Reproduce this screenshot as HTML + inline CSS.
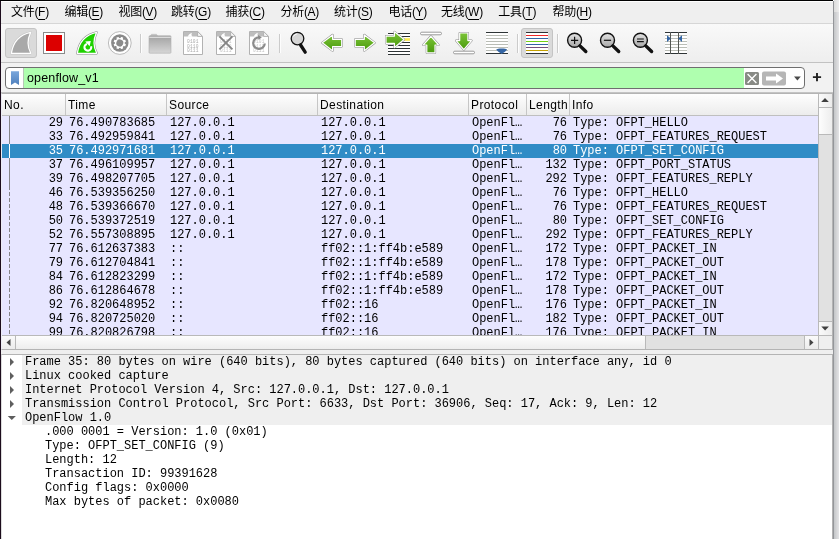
<!DOCTYPE html><html lang="zh-CN"><head><meta charset="utf-8"><title>Wireshark</title><style>html,body{margin:0;padding:0;}
body{width:839px;height:539px;overflow:hidden;background:#fff;position:relative;font-family:"Liberation Sans","Noto Sans CJK SC",sans-serif;font-size:12px;color:#000;}
#win{position:absolute;left:0;top:0;width:833px;height:539px;background:#efefef;overflow:hidden;}
#lb{position:absolute;left:0;top:0;width:1px;height:539px;background:#1c0c1c;}
#tb{position:absolute;left:0;top:0;width:833px;height:1px;background:#000;}
#rb1{position:absolute;left:833px;top:1px;width:1px;height:538px;background:#94969a;}
#rb2{position:absolute;left:834px;top:0;width:5px;height:539px;background:linear-gradient(90deg,#c4c6c8,#e4e4e6);}#rb3{position:absolute;left:834px;top:0;width:5px;height:12px;background:linear-gradient(90deg,#dcdcdc,#ececec);}
#menubar{position:absolute;left:1px;top:1px;width:832px;height:23px;background:#efefef;border-top:1px solid #fff;box-sizing:border-box;border-bottom:1px solid #d6d6d6;}
.mi{position:absolute;top:2px;line-height:16px;font-size:12px;white-space:nowrap;letter-spacing:-0.3px;}
.mi u{text-decoration:underline;text-underline-offset:2.5px;text-decoration-thickness:1px;}
#toolbar{position:absolute;left:1px;top:24px;width:832px;height:39px;background:linear-gradient(#f9f9f9,#eeeeee);border-bottom:1px solid #c2c2c2;box-sizing:border-box;}
#toolbar svg{position:absolute;}
.tbtn{position:absolute;top:4px;height:30px;box-sizing:border-box;border:1px solid #c4c4c4;border-radius:3px;background:#dadada;}
.tsep{position:absolute;top:10px;width:1px;height:19px;background:#cbcbcb;border-right:1px solid #fdfdfd;}
#filterbar{position:absolute;left:1px;top:63px;width:832px;height:30px;background:#f2f2f2;border-bottom:1px solid #c4c4c4;box-sizing:border-box;}
#fentry{position:absolute;left:4px;top:4px;width:800px;height:22px;box-sizing:border-box;border:1px solid #6f6f6f;border-radius:4px;background:#fff;overflow:hidden;}
#fgreen{position:absolute;left:18px;top:0;width:720px;height:20px;background:#afffaf;}
#ftext{position:absolute;left:21px;top:1px;line-height:18px;font-size:12.5px;letter-spacing:0.15px;}
#plist{position:absolute;left:1px;top:93px;width:832px;height:257px;background:#fff;border:1px solid #b4b4b4;border-left-color:#ececf4;box-sizing:border-box;}
#phead{position:absolute;left:0;top:0;width:816px;height:22px;background:linear-gradient(#fefefe,#ececec);border-bottom:1px solid #bfbfbf;box-sizing:border-box;}
.hc{position:absolute;top:0;height:21px;box-sizing:border-box;border-right:1px solid #c6c6c6;}
.hc span{position:absolute;left:2px;top:3px;line-height:16px;font-size:12px;letter-spacing:0.4px;}
#prows{position:absolute;left:0;top:22px;width:816px;height:219px;background:#e7e6ff;overflow:hidden;font-family:"Liberation Mono",monospace;font-size:12px;letter-spacing:-0.017px;}
.pr{position:absolute;left:0;width:816px;height:14px;line-height:15px;white-space:pre;}
.pr.sel{background:#308cc6;color:#fff;}
.c{position:absolute;top:0;}
.no{left:0;width:61px;text-align:right;}
.tm{left:67px;}
.src{left:168px;}
.dst{left:319px;}
.pro{left:470px;}
.len{left:525px;width:40px;text-align:right;}
.inf{left:571px;}
#rel1{position:absolute;left:7px;top:0;width:1px;height:70px;background:#858588;}
#rel2{position:absolute;left:7px;top:70px;width:1px;height:160px;background:repeating-linear-gradient(180deg,#858588 0,#858588 4px,transparent 4px,transparent 6px);}
#relsel{position:absolute;left:7px;top:28px;width:1px;height:14px;background:#fff;}
#details{position:absolute;left:1px;top:354px;width:832px;height:185px;background:#fff;border-top:1px solid #b4b4b4;border-left:1px solid #dcdcdc;border-right:1px solid #b2b2b2;box-sizing:border-box;font-family:"Liberation Mono",monospace;font-size:12px;letter-spacing:-0.017px;}
.dr{position:absolute;left:20px;width:810px;height:14px;line-height:15px;white-space:pre;background:#efefef;}
.dr span{position:absolute;left:3px;top:0;}
.dc{position:absolute;left:43px;height:14px;line-height:15px;white-space:pre;}
.tri{position:absolute;width:0;height:0;}
#win{will-change:transform;}
</style></head><body>
<div id="win">
<div id="menubar">
<span class="mi" style="left:10px">文件(<u>F</u>)</span>
<span class="mi" style="left:63.5px">编辑(<u>E</u>)</span>
<span class="mi" style="left:117.5px">视图(<u>V</u>)</span>
<span class="mi" style="left:170px">跳转(<u>G</u>)</span>
<span class="mi" style="left:224.5px">捕获(<u>C</u>)</span>
<span class="mi" style="left:279.5px">分析(<u>A</u>)</span>
<span class="mi" style="left:333px">统计(<u>S</u>)</span>
<span class="mi" style="left:387.5px">电话(<u>Y</u>)</span>
<span class="mi" style="left:440px">无线(<u>W</u>)</span>
<span class="mi" style="left:497.3px">工具(<u>T</u>)</span>
<span class="mi" style="left:551.5px">帮助(<u>H</u>)</span>
</div>
<div id="toolbar"><div class="tbtn" style="left:4px;width:32px"></div>
<div class="tbtn" style="left:520px;width:32px"></div>
<div class="tsep" style="left:139px"></div><div class="tsep" style="left:278px"></div><div class="tsep" style="left:516px"></div><div class="tsep" style="left:556px"></div>
<svg style="left:0;top:0" width="832" height="38" viewBox="1 24 832 38">
<defs>
<linearGradient id="gg" x1="0" y1="0" x2="0" y2="1"><stop offset="0" stop-color="#7cc438"/><stop offset="1" stop-color="#4a9a0c"/></linearGradient>
<linearGradient id="fg" x1="0" y1="0" x2="0" y2="1"><stop offset="0" stop-color="#9c9c9c"/><stop offset="0.12" stop-color="#a8a8a8"/><stop offset="1" stop-color="#d6d6d6"/></linearGradient>
<linearGradient id="lg" x1="0" y1="0" x2="0" y2="1"><stop offset="0" stop-color="#e2e2e2"/><stop offset="1" stop-color="#a8a8a8"/></linearGradient>
<g id="fin"><path d="M31.4 31.6 C20 34 12.5 42 10.6 53.9 H31.6 C27.6 47 27.8 39 31.4 31.6 Z"/></g>
<g id="doc"><path d="M0.5 0.5 H14.6 L19.5 5.4 V23.5 H0.5 Z" fill="#fff" stroke="#b2b2b2"/><path d="M1 1 H14.4 L16 2.6 V5.6 H1 Z" fill="#bdbdbd"/><path d="M4.6 5.7 C5.4 3.7 6.9 2.4 8.9 1.7 C8.2 3.3 8.4 4.5 9.5 5.7 Z" fill="#fff"/><path d="M14.6 0.5 V5.4 H19.5 Z" fill="#f6f6f6" stroke="#b2b2b2" stroke-linejoin="round"/></g>
<g id="bits" font-family="Liberation Mono, monospace" font-size="4.6" fill="#aaaaaa"><text x="3.9" y="11.8" textLength="11.7">0101</text><text x="3.9" y="16.5" textLength="11.7">0110</text><text x="3.9" y="21.2" textLength="11.7">0111</text></g>
<g id="lens"><circle cx="0" cy="0" r="7" fill="url(#lg)" stroke="#111" stroke-width="1.4"/><path d="M5.4 5.6 L11.2 11.2" stroke="#111" stroke-width="3.4" stroke-linecap="round"/></g>
</defs>
<!-- fin start (disabled/pressed) -->
<g transform="translate(21.1 42.85) scale(0.93 0.94) translate(-21.1 -42.75)"><use href="#fin" fill="#a9a9a9" stroke="#c4c4c4" stroke-width="2.4" stroke-linejoin="round"/><use href="#fin" fill="#a9a9a9" stroke="#fff" stroke-width="1.3" stroke-linejoin="round"/></g>
<!-- stop -->
<rect x="43.5" y="32.5" width="21" height="21" fill="#fff" stroke="#8a8a8a"/><rect x="46" y="35" width="16" height="16" fill="#dc0000"/>
<!-- restart fin -->
<g transform="translate(87.05 42.85) scale(0.93 0.94) translate(-21.1 -42.75)"><use href="#fin" fill="#1fd000" stroke="#8a8a8a" stroke-width="2.4" stroke-linejoin="round"/><use href="#fin" fill="#1fd000" stroke="#fff" stroke-width="1.3" stroke-linejoin="round"/></g>
<path d="M91.1 46.3 A3.4 3.4 0 1 1 87 43.95" fill="none" stroke="#fff" stroke-width="2.1"/><path d="M85.2 41.6 L90.8 41 L89.6 46.2 Z" fill="#fff"/>
<!-- gear -->
<circle cx="119.8" cy="43" r="11.4" fill="#fff" stroke="#aaa" stroke-width="0.8"/><circle cx="119.8" cy="43" r="8.7" fill="#8a8a8a"/>
<g transform="translate(119.8 43) rotate(22.5)" fill="#fff"><circle r="4.9"/><rect x="-1.25" y="-6.2" width="2.5" height="12.4" rx="0.4"/><rect x="-1.25" y="-6.2" width="2.5" height="12.4" rx="0.4" transform="rotate(45)"/><rect x="-1.25" y="-6.2" width="2.5" height="12.4" rx="0.4" transform="rotate(90)"/><rect x="-1.25" y="-6.2" width="2.5" height="12.4" rx="0.4" transform="rotate(135)"/><circle r="3.5" fill="#8a8a8a"/></g>
<!-- folder -->
<path d="M150.5 36 L151.5 34.3 H156.5 L157.5 36 Z" fill="#c4c4c4" stroke="#bcbcbc" stroke-width="0.6"/>
<rect x="149" y="35.8" width="22" height="17.4" rx="0.8" fill="url(#fg)" stroke="#b0b0b0" stroke-width="0.6"/><rect x="149.3" y="36.8" width="21.4" height="0.9" fill="#f2f2f2"/>
<!-- files -->
<g transform="translate(183 31)"><use href="#doc"/><use href="#bits"/></g>
<g transform="translate(216 31)"><use href="#doc"/><use href="#bits" opacity="0.7"/><path d="M3.4 5.4 L16.4 18.4 M16.4 5.4 L3.4 18.4" stroke="#858585" stroke-width="1.9"/></g>
<g transform="translate(249 31)"><use href="#doc"/><use href="#bits" opacity="0.7"/><path d="M10.2 6.3 A5.8 5.8 0 1 0 15.8 12.5" fill="none" stroke="#8b8b8b" stroke-width="2.2"/><path d="M9.2 3.8 L12.8 6.6 L9.2 8.9 Z" fill="#8b8b8b" transform="rotate(-8 10.2 6.3)"/></g>
<!-- find -->
<circle cx="297.5" cy="38.6" r="6.3" fill="#d6d6d6" stroke="#111" stroke-width="1.3"/><path d="M293.5 36.5 A4.5 4.5 0 0 1 297 33.8" fill="none" stroke="#fff" stroke-width="0.9"/><path d="M300.6 45 L305.2 52.2" stroke="#111" stroke-width="3.3" stroke-linecap="round"/>
<!-- back / forward -->
<g id="larr"><path d="M322.3 42.8 L332.6 35 V39.3 H341.7 V46.5 H332.6 V50.7 Z" fill="url(#gg)" stroke="#8c8c8c" stroke-width="2.2" stroke-linejoin="round"/><path d="M322.3 42.8 L332.6 35 V39.3 H341.7 V46.5 H332.6 V50.7 Z" fill="url(#gg)" stroke="#fff" stroke-width="1.2" stroke-linejoin="round"/></g>
<g transform="translate(696.9 0) scale(-1 1)"><use href="#larr"/></g>
<!-- goto -->
<rect x="388" y="33" width="22" height="22" fill="#fff"/>
<path d="M388 33.5 H410 M388 36.5 H410 M388 42.5 H410 M388 45.5 H410 M388 48.5 H410 M388 51.5 H410 M388 54.5 H410" stroke="#2e3436" stroke-width="1"/><rect x="400" y="38.2" width="10" height="2.6" fill="#fce94f"/>
<g transform="translate(703.8 -3.2) scale(-0.93 1)"><use href="#larr"/></g>
<!-- first -->
<rect x="420.5" y="32.2" width="21" height="2.6" rx="1.3" fill="#fff" stroke="#909090" stroke-width="0.9"/>
<path d="M430.9 36.3 L438.6 45 H435 V52.8 H426.8 V45 H423.2 Z" fill="url(#gg)" stroke="#8c8c8c" stroke-width="2.2" stroke-linejoin="round"/><path d="M430.9 36.3 L438.6 45 H435 V52.8 H426.8 V45 H423.2 Z" fill="url(#gg)" stroke="#fff" stroke-width="1.2" stroke-linejoin="round"/>
<!-- last -->
<path d="M463.8 49.6 L471.5 40.6 H467.9 V33 H459.7 V40.6 H456.1 Z" fill="url(#gg)" stroke="#8c8c8c" stroke-width="2.2" stroke-linejoin="round"/><path d="M463.8 49.6 L471.5 40.6 H467.9 V33 H459.7 V40.6 H456.1 Z" fill="url(#gg)" stroke="#fff" stroke-width="1.2" stroke-linejoin="round"/>
<rect x="453.5" y="51.2" width="21" height="2.6" rx="1.3" fill="#fff" stroke="#909090" stroke-width="0.9"/>
<!-- autoscroll -->
<rect x="486" y="32" width="22" height="22" fill="#fff"/>
<path d="M486 35.5 H508 M486 38.5 H508 M486 41.5 H508 M486 44.5 H508 M486 47.5 H508 M486 50.5 H508" stroke="#babdb6" stroke-width="1"/><path d="M486 32.5 H508 M486 53.5 H508" stroke="#2e3436" stroke-width="1"/>
<path d="M496.2 49.6 C497 48 506.4 48 507.2 49.6 C506 51.5 503.5 53 501.7 54 C499.9 53 497.4 51.5 496.2 49.6 Z" fill="#3465a4"/>
<!-- colorize -->
<rect x="526" y="32" width="22" height="22" fill="#fff"/>
<path d="M526 32.5 H548 M526 53.5 H548" stroke="#2e3436"/><path d="M526 35.5 H548" stroke="#ef2929"/><path d="M526 38.5 H548 M526 44.5 H548" stroke="#3465a4"/><path d="M526 41.5 H548" stroke="#73d216"/><path d="M526 47.5 H548" stroke="#75507b"/><path d="M526 50.5 H548" stroke="#c4a000"/>
<!-- zoom -->
<g transform="translate(574.6 40.3)"><use href="#lens"/><path d="M-3.6 0 H3.6 M0 -3.6 V3.6" stroke="#111" stroke-width="1.2"/></g>
<g transform="translate(607.5 40.3)"><use href="#lens"/><path d="M-3.6 0 H3.6" stroke="#111" stroke-width="1.2"/></g>
<g transform="translate(640.4 40.3)"><use href="#lens"/><path d="M-3.4 -1.3 H3.4 M-3.4 1.3 H3.4" stroke="#111" stroke-width="1.1"/></g>
<!-- resize columns -->
<rect x="665" y="32" width="22" height="22" fill="#fff"/>
<path d="M665 35.5 H687 M665 38.5 H687 M665 41.5 H687 M665 44.5 H687 M665 47.5 H687 M665 50.5 H687" stroke="#babdb6"/><path d="M665 32.5 H687 M665 53.5 H687" stroke="#2e3436"/><path d="M670.5 32 V54 M678.5 32 V54" stroke="#555753"/>
<path d="M667 35.3 L670.8 38.6 L667 42 Z M682 35.3 L678.2 38.6 L682 42 Z" fill="#3465a4"/>
</svg>
</div>
<div id="filterbar">
<div id="fentry"><div id="fgreen"></div><div style="position:absolute;left:17px;top:0;width:1px;height:20px;background:#b8c8b8"></div>
<svg style="position:absolute;left:3px;top:2px" width="12" height="16" viewBox="0 0 12 16"><defs><linearGradient id="bk" x1="0" y1="0" x2="0" y2="1"><stop offset="0" stop-color="#7aa7dc"/><stop offset="1" stop-color="#4f80bd"/></linearGradient></defs><path d="M2 1.2 H10 V15 L6 12.4 L2 15 Z" fill="url(#bk)"/></svg>
<span id="ftext">openflow_v1</span>
<svg style="position:absolute;left:738px;top:3px" width="60" height="16" viewBox="0 0 60 16">
<rect x="1" y="1" width="14" height="13" rx="1.5" fill="#888a85"/><path d="M3.6 3.1 L12.4 11.9 M12.4 3.1 L3.6 11.9" stroke="#fff" stroke-width="1.4"/>
<rect x="18" y="0.5" width="24" height="14" rx="2" fill="#b6b6b6"/><path d="M22 5.5 H32 V2.5 L39 7.5 L32 12.5 V9.5 H22 Z" fill="#fff"/>
<path d="M50 5.6 H56.8 L53.4 9.4 Z" fill="#4a4a4a"/>
</svg>
</div>
<svg style="position:absolute;left:810px;top:8px" width="12" height="12" viewBox="0 0 12 12"><path d="M6 2 V10.2 M1.9 6.1 H10.1" stroke="#222" stroke-width="1.9"/></svg>
</div>

<div id="plist">
<div id="phead">
<div class="hc" style="left:0px;width:64px"><span>No.</span></div>
<div class="hc" style="left:64px;width:101px"><span>Time</span></div>
<div class="hc" style="left:165px;width:151px"><span>Source</span></div>
<div class="hc" style="left:316px;width:151px"><span>Destination</span></div>
<div class="hc" style="left:467px;width:58px"><span>Protocol</span></div>
<div class="hc" style="left:525px;width:43px"><span>Length</span></div>
<div class="hc" style="left:568px;width:248px;border-right:0"><span>Info</span></div>
</div>
<div id="prows">
<div class="pr" style="top:0px"><span class="c no">29</span><span class="c tm">76.490783685</span><span class="c src">127.0.0.1</span><span class="c dst">127.0.0.1</span><span class="c pro">OpenFl…</span><span class="c len">76</span><span class="c inf">Type: OFPT_HELLO</span></div>
<div class="pr" style="top:14px"><span class="c no">33</span><span class="c tm">76.492959841</span><span class="c src">127.0.0.1</span><span class="c dst">127.0.0.1</span><span class="c pro">OpenFl…</span><span class="c len">76</span><span class="c inf">Type: OFPT_FEATURES_REQUEST</span></div>
<div class="pr sel" style="top:28px"><span class="c no">35</span><span class="c tm">76.492971681</span><span class="c src">127.0.0.1</span><span class="c dst">127.0.0.1</span><span class="c pro">OpenFl…</span><span class="c len">80</span><span class="c inf">Type: OFPT_SET_CONFIG</span></div>
<div class="pr" style="top:42px"><span class="c no">37</span><span class="c tm">76.496109957</span><span class="c src">127.0.0.1</span><span class="c dst">127.0.0.1</span><span class="c pro">OpenFl…</span><span class="c len">132</span><span class="c inf">Type: OFPT_PORT_STATUS</span></div>
<div class="pr" style="top:56px"><span class="c no">39</span><span class="c tm">76.498207705</span><span class="c src">127.0.0.1</span><span class="c dst">127.0.0.1</span><span class="c pro">OpenFl…</span><span class="c len">292</span><span class="c inf">Type: OFPT_FEATURES_REPLY</span></div>
<div class="pr" style="top:70px"><span class="c no">46</span><span class="c tm">76.539356250</span><span class="c src">127.0.0.1</span><span class="c dst">127.0.0.1</span><span class="c pro">OpenFl…</span><span class="c len">76</span><span class="c inf">Type: OFPT_HELLO</span></div>
<div class="pr" style="top:84px"><span class="c no">48</span><span class="c tm">76.539366670</span><span class="c src">127.0.0.1</span><span class="c dst">127.0.0.1</span><span class="c pro">OpenFl…</span><span class="c len">76</span><span class="c inf">Type: OFPT_FEATURES_REQUEST</span></div>
<div class="pr" style="top:98px"><span class="c no">50</span><span class="c tm">76.539372519</span><span class="c src">127.0.0.1</span><span class="c dst">127.0.0.1</span><span class="c pro">OpenFl…</span><span class="c len">80</span><span class="c inf">Type: OFPT_SET_CONFIG</span></div>
<div class="pr" style="top:112px"><span class="c no">52</span><span class="c tm">76.557308895</span><span class="c src">127.0.0.1</span><span class="c dst">127.0.0.1</span><span class="c pro">OpenFl…</span><span class="c len">292</span><span class="c inf">Type: OFPT_FEATURES_REPLY</span></div>
<div class="pr" style="top:126px"><span class="c no">77</span><span class="c tm">76.612637383</span><span class="c src">::</span><span class="c dst">ff02::1:ff4b:e589</span><span class="c pro">OpenFl…</span><span class="c len">172</span><span class="c inf">Type: OFPT_PACKET_IN</span></div>
<div class="pr" style="top:140px"><span class="c no">79</span><span class="c tm">76.612704841</span><span class="c src">::</span><span class="c dst">ff02::1:ff4b:e589</span><span class="c pro">OpenFl…</span><span class="c len">178</span><span class="c inf">Type: OFPT_PACKET_OUT</span></div>
<div class="pr" style="top:154px"><span class="c no">84</span><span class="c tm">76.612823299</span><span class="c src">::</span><span class="c dst">ff02::1:ff4b:e589</span><span class="c pro">OpenFl…</span><span class="c len">172</span><span class="c inf">Type: OFPT_PACKET_IN</span></div>
<div class="pr" style="top:168px"><span class="c no">86</span><span class="c tm">76.612864678</span><span class="c src">::</span><span class="c dst">ff02::1:ff4b:e589</span><span class="c pro">OpenFl…</span><span class="c len">178</span><span class="c inf">Type: OFPT_PACKET_OUT</span></div>
<div class="pr" style="top:182px"><span class="c no">92</span><span class="c tm">76.820648952</span><span class="c src">::</span><span class="c dst">ff02::16</span><span class="c pro">OpenFl…</span><span class="c len">176</span><span class="c inf">Type: OFPT_PACKET_IN</span></div>
<div class="pr" style="top:196px"><span class="c no">94</span><span class="c tm">76.820725020</span><span class="c src">::</span><span class="c dst">ff02::16</span><span class="c pro">OpenFl…</span><span class="c len">182</span><span class="c inf">Type: OFPT_PACKET_OUT</span></div>
<div class="pr" style="top:210px"><span class="c no">99</span><span class="c tm">76.820826798</span><span class="c src">::</span><span class="c dst">ff02::16</span><span class="c pro">OpenFl…</span><span class="c len">176</span><span class="c inf">Type: OFPT_PACKET_IN</span></div>
<div id="rel1"></div><div id="rel2"></div><div id="relsel"></div>
</div>
<div id="vs" style="position:absolute;left:816px;top:0;width:13px;height:241px;background:#e1e1e1;border-left:1px solid #b9b9b9;">
<div style="position:absolute;left:0;top:0;width:13px;height:13px;background:linear-gradient(90deg,#fafafa,#ececec);border-bottom:1px solid #b9b9b9;"><svg width="13" height="13" style="position:absolute;left:0;top:0"><path d="M2.2 8.1 L6 4 L9.8 8.1 Z" fill="#3e3e3e"/></svg></div>
<div style="position:absolute;left:0;top:14px;width:13px;height:26px;background:linear-gradient(90deg,#fdfdfd,#ededed);border-bottom:1px solid #b9b9b9;"></div>
<div style="position:absolute;left:0;top:227px;width:13px;height:14px;background:linear-gradient(90deg,#fafafa,#ececec);border-top:1px solid #b9b9b9;box-sizing:border-box"><svg width="13" height="13" style="position:absolute;left:0;top:0"><path d="M2.3 4.4 L6.1 8.4 L9.9 4.4 Z" fill="#3e3e3e"/></svg></div>
</div>
<div id="hs" style="position:absolute;left:0;top:241px;width:830px;height:14px;background:#e1e1e1;border-top:1px solid #b9b9b9;box-sizing:border-box;">
<div style="position:absolute;left:0;top:0;width:13px;height:13px;background:linear-gradient(#fafafa,#ececec);border-right:1px solid #b9b9b9;"><svg width="13" height="13" style="position:absolute;left:0;top:0"><path d="M8.5 3 L4.5 6.5 L8.5 10 Z" fill="#444"/></svg></div>
<div style="position:absolute;left:14px;top:0;width:629px;height:13px;background:linear-gradient(#fdfdfd,#ededed);border-right:1px solid #b9b9b9;"></div>
<div style="position:absolute;left:802px;top:0;width:13px;height:13px;background:linear-gradient(#fafafa,#ececec);border-left:1px solid #b9b9b9;border-right:1px solid #b9b9b9;"><svg width="13" height="13" style="position:absolute;left:0;top:0"><path d="M4.5 3 L8.5 6.5 L4.5 10 Z" fill="#444"/></svg></div>
<div style="position:absolute;left:817px;top:0;width:13px;height:13px;background:#efefef;"></div>
</div>

</div>
<div id="details">
<div class="dr" style="top:0"><span>Frame 35: 80 bytes on wire (640 bits), 80 bytes captured (640 bits) on interface any, id 0</span></div>
<div class="dr" style="top:14px"><span>Linux cooked capture</span></div>
<div class="dr" style="top:28px"><span>Internet Protocol Version 4, Src: 127.0.0.1, Dst: 127.0.0.1</span></div>
<div class="dr" style="top:42px"><span>Transmission Control Protocol, Src Port: 6633, Dst Port: 36906, Seq: 17, Ack: 9, Len: 12</span></div>
<div class="dr" style="top:56px"><span>OpenFlow 1.0</span></div>
<div class="dc" style="top:70px">.000 0001 = Version: 1.0 (0x01)</div>
<div class="dc" style="top:84px">Type: OFPT_SET_CONFIG (9)</div>
<div class="dc" style="top:98px">Length: 12</div>
<div class="dc" style="top:112px">Transaction ID: 99391628</div>
<div class="dc" style="top:126px">Config flags: 0x0000</div>
<div class="dc" style="top:140px">Max bytes of packet: 0x0080</div>
<svg style="position:absolute;left:0;top:0" width="22" height="70">
<path d="M8 3.1 L12 7 L8 10.9 Z M8 17.1 L12 21 L8 24.9 Z M8 31.1 L12 35 L8 38.9 Z M8 45.1 L12 49 L8 52.9 Z M5.7 61 H13.9 L9.8 65.1 Z" fill="#5e5e5e"/>
</svg>
</div>

</div>
<div id="lb"></div><div id="tb"></div><div id="rb1"></div><div id="rb2"></div><div id="rb3"></div>
</body></html>
